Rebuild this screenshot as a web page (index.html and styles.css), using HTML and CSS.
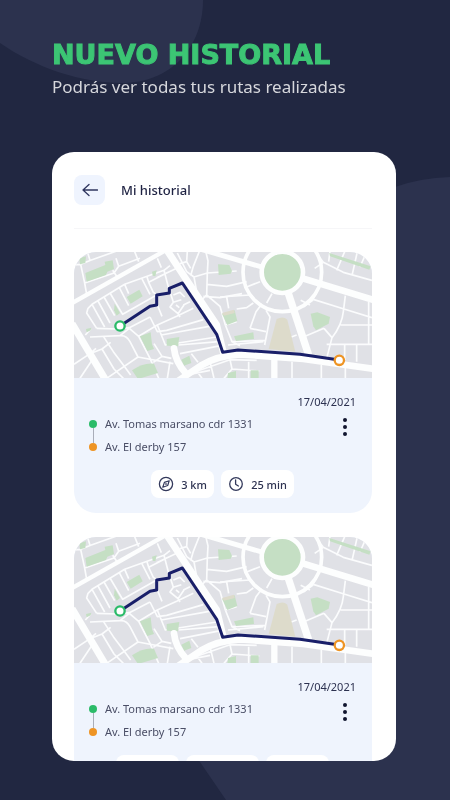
FILE: index.html
```
<!DOCTYPE html>
<html lang="es">
<head>
    <meta charset="UTF-8">
    <meta name="viewport" content="width=device-width, initial-scale=1.0">
    <title>Mi historial</title>
    <link rel="stylesheet" href="styles.css">
</head>
<body>
    <!-- Shared drawings -->
    <svg class="sprite" aria-hidden="true">
        <symbol id="map" viewBox="12 21 894 378" preserveAspectRatio="xMidYMid slice">
            <rect x="0" y="0" width="920" height="420" fill="#e0e1e6"/>

            <!-- Small streets -->
            <g fill="none" stroke="#fbfcfd" stroke-width="5" stroke-linejoin="round">
                <path d="M12 60L32 58L62 46L190 0M32 58L44 114L50 148M44 114L132 84M52 20L60 46M128 76L140 94M138 40L146 64L210 40M146 64L132 84M190 10L206 50"/>
                <path d="M54 190L66 178L164 118L282 76L300 62M54 190L50 204L80 250M66 178L104 246M84 168L120 234M102 156L134 212M120 144L158 208L260 150M148 128L176 182M164 118L176 146M214 98L240 148M230 92L236 112L250 142L262 150M236 112L290 84M282 76L296 130M262 40L274 68M320 70L260 98"/>
                <path d="M80 250L140 252L178 248L240 216M62 252L46 270M60 276L150 272L178 250M100 274L130 320L160 360M150 272Q170 270 180 290L204 336M12 358L60 326L78 310M70 340L30 400M60 326L96 312L122 292M96 312L132 372L160 400M110 400L204 336L310 356M160 360L182 390"/>
                <path d="M178 250L206 274L240 340L266 400M206 274L262 240L320 214L370 190M240 216L262 260L290 256L400 224M262 240L274 270L430 242M274 270L286 300L440 276M252 296L276 334L304 340M326 300L446 290M330 326L452 302M276 334L250 352M262 180L276 214M364 326L384 352M300 350L292 400"/>
                <path d="M300 140L310 172L300 186L324 206L342 180M310 150L330 142L344 156M310 172L334 164M324 206L330 216M340 180L360 170M318 180L328 188"/>
                <path d="M322 24L350 80L372 96L412 84L500 78M352 18L350 50L330 56M350 50L362 70M390 14L370 64L362 92M412 84L414 48L408 22M412 84L410 150L390 170M410 118L470 124L530 110M400 154L450 158L516 146M410 150L450 184L466 240M372 96L380 140"/>
                <path d="M450 156L540 150M470 156L476 190M466 240L500 230M540 250L558 200L576 176M540 250L588 260M500 192L530 188L550 174M588 196L600 216L584 300M466 240L486 290L510 302M474 300L580 290M486 290L588 286M530 126L570 110M590 174L606 146M664 276L680 270M692 166L720 180"/>
                <path d="M740 26L760 52L820 82L906 106M780 18L776 50M824 20L800 76M862 20L846 92M890 20L870 66M734 70L760 52M826 152L820 200Q816 240 786 278L762 250M732 164L822 192L906 218M786 278L770 340M812 240H906M896 170V298M770 298H906M824 298V345M860 298V350M762 250L700 276M744 134L728 166L700 186"/>
                <path d="M376 380L480 344L560 346M376 372L396 400M420 350L432 400M480 344L486 372L462 400M536 350V400M486 372L568 378M666 350V400M754 360V400M826 366V400M340 392L420 376"/>
            </g>

            <!-- Parks -->
            <g fill="#c5dfc4">
                <path d="M46 84L106 60L104 50L128 46L132 72L112 80L108 90L50 110Z"/>
                <path d="M28 40L48 34L46 54L30 58Z"/>
                <path d="M170 156L208 134L218 154L182 176Z"/>
                <path d="M134 176L150 204L140 212L132 196Z"/>
                <path d="M246 80L260 76L256 94L248 92Z"/>
                <path d="M48 252L64 248L62 256L50 262Z"/>
                <path d="M210 274L242 262L246 298L252 312L232 318Z"/>
                <path d="M290 282L328 276L324 304L290 302Z"/>
                <path d="M334 344L358 332L364 354L342 362Z"/>
                <path d="M186 376Q220 352 252 356L264 384L204 402Z"/>
                <path d="M444 58L478 60L486 78L482 86L446 90Z"/>
                <path d="M456 206L494 196L502 228L472 240Z"/>
                <path d="M492 274L550 262L552 282L498 288Z"/>
                <path d="M722 206L742 202L780 216L776 236L738 256L730 244Z"/>
                <path d="M778 24L902 64L898 74L780 34Z"/>
                <path d="M474 384L498 378L498 400H472Z"/>
                <path d="M542 376H566V400H542Z"/>
            </g>
            <path d="M620 222Q640 212 652 224L676 320L596 312Z" fill="#dddbcb"/>
            <path d="M456 204L492 194L494 204L462 212Z" fill="#dddbcb"/>

            <!-- Avenues -->
            <g fill="none" stroke="#fdfefe" stroke-linejoin="round">
                <path d="M0 178L290 14" stroke-width="13"/>
                <path d="M286 8L345 98L440 240L462 330" stroke-width="21"/>
                <path d="M6 236L110 410" stroke-width="21"/>
                <path d="M318 412L392 362Q440 332 510 328Q600 334 700 342L920 373" stroke-width="20"/>
                <path d="M312 310Q316 352 350 388" stroke-width="20" stroke-linecap="round"/>
                <path d="M390 12L582 68" stroke-width="15"/>
                <path d="M698 100L920 168" stroke-width="20"/>
                <path d="M654 142L716 330" stroke-width="22"/>
                <path d="M613 340V410" stroke-width="19"/>
                <circle cx="637" cy="82" r="118" stroke-width="11"/>
            </g>
            <circle cx="637" cy="82" r="62" fill="#c5dfc4" stroke="#fdfefe" stroke-width="14"/>

            <!-- Route -->
            <path d="M150 243L240 184L260 180V150L298 144V130L337 114L440 268L458 322L504 315L690 328L808 345" fill="none" stroke="#191f69" stroke-width="9" stroke-linejoin="round"/>
            <circle cx="150" cy="243" r="14" fill="#fff" stroke="#2bbb69" stroke-width="7"/>
            <circle cx="808" cy="346" r="14" fill="#fff" stroke="#ee9424" stroke-width="7"/>
        </symbol>

        <symbol id="compass" viewBox="0 0 16 16">
            <g fill="none" stroke="#343a5c" stroke-linejoin="round">
                <circle cx="8" cy="8" r="6.6" stroke-width="1.3"/>
                <path d="M11.2 4.8L9.7 9.5L4.8 11.2L6.4 6.4Z" stroke-width="1.2"/>
                <circle cx="8" cy="8" r=".5"/>
            </g>
        </symbol>

        <symbol id="clock" viewBox="0 0 16 16">
            <g fill="none" stroke="#343a5c" stroke-width="1.3" stroke-linecap="round" stroke-linejoin="round">
                <circle cx="8" cy="8" r="6.3"/>
                <path d="M7.6 4V8.2L10.4 10"/>
            </g>
        </symbol>

        <symbol id="dots" viewBox="0 0 4 18">
            <g fill="#11152f">
                <circle cx="2" cy="2" r="2"/>
                <circle cx="2" cy="9" r="2"/>
                <circle cx="2" cy="16" r="2"/>
            </g>
        </symbol>
    </svg>

    <svg class="backdrop" viewBox="0 0 450 800" preserveAspectRatio="none" aria-hidden="true">
        <path d="M0 0H203C203 48 170 83 122 83C82 83 36 68 0 43Z" fill="#2c324e"/>
        <path d="M450 177Q420 178 395 187C240 240 130 500 150 650Q160 700 200 762L226 800H450Z" fill="#2c324e"/>
    </svg>

    <header class="intro">
        <h1>NUEVO HISTORIAL</h1>
        <p>Podrás ver todas tus rutas realizadas</p>
    </header>

    <main class="phone">
        <div class="topbar">
            <button class="back" type="button" aria-label="Volver">
                <svg viewBox="0 0 16 14" width="16" height="14">
                    <path d="M7 1.5L1 7L7 12.5M1 7H15.5" fill="none" stroke="#30365f" stroke-width="1.3" stroke-linecap="round" stroke-linejoin="round"/>
                </svg>
            </button>
            <h2>Mi historial</h2>
        </div>

        <div class="trips">
            <article class="trip">
                <svg class="trip-map" aria-hidden="true"><use href="#map"/></svg>
                <div class="trip-info">
                    <time class="date" datetime="2021-04-17">17/04/2021</time>
                    <div class="trip-row">
                        <ul class="stops">
                            <li class="from">Av. Tomas marsano cdr 1331</li>
                            <li class="to">Av. El derby 157</li>
                        </ul>
                        <button class="more" type="button" aria-label="Opciones">
                            <svg width="4" height="18"><use href="#dots"/></svg>
                        </button>
                    </div>
                    <div class="chips">
                        <span class="chip"><svg width="16" height="16"><use href="#compass"/></svg>3 km</span>
                        <span class="chip"><svg width="16" height="16"><use href="#clock"/></svg>25 min</span>
                    </div>
                </div>
            </article>

            <article class="trip">
                <svg class="trip-map" aria-hidden="true"><use href="#map"/></svg>
                <div class="trip-info">
                    <time class="date" datetime="2021-04-17">17/04/2021</time>
                    <div class="trip-row">
                        <ul class="stops">
                            <li class="from">Av. Tomas marsano cdr 1331</li>
                            <li class="to">Av. El derby 157</li>
                        </ul>
                        <button class="more" type="button" aria-label="Opciones">
                            <svg width="4" height="18"><use href="#dots"/></svg>
                        </button>
                    </div>
                    <div class="chips">
                        <span class="chip"></span>
                        <span class="chip wide"></span>
                        <span class="chip"></span>
                    </div>
                </div>
            </article>
        </div>
    </main>
</body>
</html>
```
FILE: styles.css
```
* {
    box-sizing: border-box;
}

body {
    display: flex;
    flex-direction: column;
    height: 100vh;
    margin: 0;
    padding: 40px 54px 39px 52px;
    background-color: #212741;
    font-family: "Noto Sans", "Open Sans", sans-serif;
    color: #2c3150;
}

h1, h2, p, ul {
    margin: 0;
    padding: 0;
}

button {
    border: 0;
    padding: 0;
    cursor: pointer;
}

svg {
    display: block;
}

.sprite {
    position: absolute;
    width: 0;
    height: 0;
}

.backdrop {
    position: fixed;
    inset: 0;
    z-index: -1;
    width: 100%;
    height: 100%;
}

/* Title */
.intro {
    margin-bottom: 48px;
    white-space: nowrap;
}

.intro h1 {
    font-family: "DejaVu Sans", sans-serif;
    font-size: 27px;
    font-weight: bold;
    line-height: 30px;
    color: #3cc574;
    -webkit-text-stroke: 1px #3cc574;
}

.intro p {
    font-size: 17px;
    line-height: 34px;
    color: #d6d7dc;
}

/* Phone screen */
.phone {
    flex: 1;
    min-height: 0;
    overflow: hidden;
    padding: 0 24px 0 22px;
    border-radius: 22px;
    background-color: #fff;
}

.topbar {
    display: flex;
    align-items: center;
    gap: 16px;
    height: 77px;
    border-bottom: 1px solid #f6f6f8;
}

.topbar h2 {
    font-size: 13px;
    font-weight: 500;
    color: #1e2242;
}

.back {
    display: flex;
    align-items: center;
    justify-content: center;
    width: 31px;
    height: 30px;
    border-radius: 8px;
    background-color: #eff4fe;
}

.trips {
    display: flex;
    flex-direction: column;
    gap: 24px;
    padding-top: 23px;
}

/* Trip card */
.trip {
    overflow: hidden;
    border-radius: 22px;
    background-color: #eff4fd;
}

.trip-map {
    width: 100%;
    height: 126px;
}

.trip-info {
    padding: 14px 16px 15px 15px;
}

.date {
    display: block;
    font-size: 11px;
    line-height: 20px;
    text-align: right;
}

.trip-row {
    display: flex;
    justify-content: space-between;
    padding-right: 9px;
}

.stops {
    list-style: none;
    font-size: 11px;
    line-height: 23px;
    color: #4a4e66;
}

.stops li {
    position: relative;
    padding-left: 16px;
}

.stops li::before {
    content: "";
    position: absolute;
    left: 0;
    top: 8px;
    width: 8px;
    height: 8px;
    border-radius: 50%;
    background-color: #2bbb69;
}

.stops .to::before {
    background-color: #ee9424;
}

.stops .from::after {
    content: "";
    position: absolute;
    left: 4px;
    top: 16px;
    width: 1px;
    height: 15px;
    background-color: #a9adb9;
}

.more {
    align-self: flex-start;
    padding: 6px 0;
    background: none;
}

.chips {
    display: flex;
    justify-content: center;
    gap: 7px;
    padding-top: 12px;
}

.chip {
    display: flex;
    align-items: center;
    gap: 7px;
    min-width: 63px;
    height: 28px;
    padding: 0 7px;
    border-radius: 8px;
    background-color: #fff;
    font-size: 11px;
    font-weight: 500;
}

.chip.wide {
    min-width: 73px;
}
```
